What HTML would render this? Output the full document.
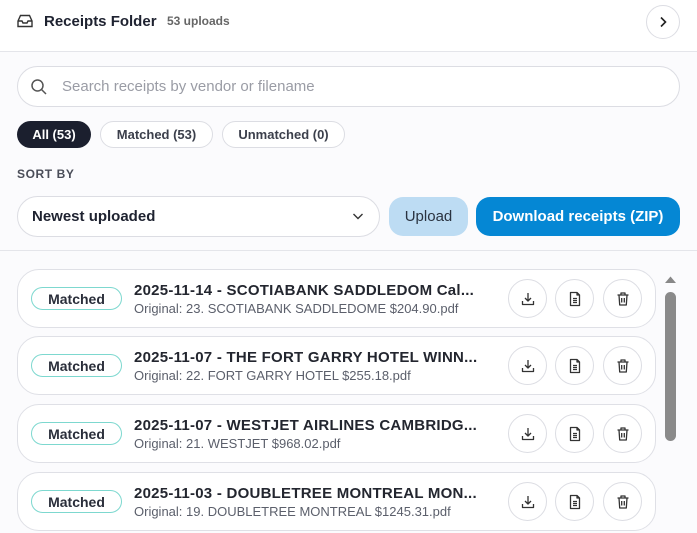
<!DOCTYPE html>
<html><head><meta charset="utf-8"><style>
*{box-sizing:border-box;margin:0;padding:0}
body{width:697px;height:533px;overflow:hidden;background:#fbfbfd;font-family:"Liberation Sans",sans-serif;color:#1e2230;position:relative}
.abs{position:absolute}
.hdr{left:0;top:0;width:697px;height:52px;border-bottom:1px solid #e4e5ea;background:#fff}
.pill{border:1px solid #dcdde3;border-radius:999px;background:#fff}
.chip{top:121px;height:27px;font-size:13px;font-weight:bold;display:flex;align-items:center;justify-content:center;color:#3b3f4b}
.card{left:17px;width:639px;height:59px;border:1px solid #dfe0e6;border-radius:22px;background:#fff}
.badge{left:13px;top:17px;width:91px;height:23px;border:1.5px solid #7dd8cf;border-radius:12px;font-size:14px;font-weight:bold;display:flex;align-items:center;justify-content:center;color:#2a2e3a}
.t{left:116px;top:12px;font-size:15px;font-weight:bold;color:#23262f;letter-spacing:.25px}
.s{left:116px;top:31px;font-size:13px;color:#5b5f6b}
.ib{top:9px;width:39px;height:39px;border:1px solid #dcdde3;border-radius:50%;display:flex;align-items:center;justify-content:center}
</style></head><body>
<div class="abs hdr">
 <svg class="abs" style="left:17px;top:14px" width="16" height="14" viewBox="0 0 16 14" fill="none" stroke="#333" stroke-width="1.4"><path d="M1 7 L3.5 1.5 H12.5 L15 7 V12.5 H1 Z M1 7 H5 L6 9 H10 L11 7 H15"/></svg>
 <div class="abs" style="left:44px;top:13px;font-size:15px;font-weight:bold">Receipts Folder</div>
 <div class="abs" style="left:167px;top:14px;font-size:12px;font-weight:bold;color:#666">53 uploads</div>
 <div class="abs pill" style="left:646px;top:5px;width:34px;height:34px;display:flex;align-items:center;justify-content:center"><svg width="10" height="12" viewBox="0 0 10 12" fill="none" stroke="#222" stroke-width="1.6"><path d="M3 1.5 L7.5 6 L3 10.5"/></svg></div>
</div>
<div class="abs pill" style="left:17px;top:66px;width:663px;height:41px"></div>
<svg class="abs" style="left:30px;top:78px" width="18" height="18" viewBox="0 0 18 18" fill="none" stroke="#555" stroke-width="1.5"><circle cx="7.5" cy="7.5" r="5.5"/><path d="M11.5 11.5 L16 16"/></svg>
<div class="abs" style="left:62px;top:78px;font-size:15px;color:#9a9ca5">Search receipts by vendor or filename</div>
<div class="abs chip" style="left:17px;width:74px;background:#1b1f2e;color:#fff;border-radius:14px">All (53)</div>
<div class="abs chip pill" style="left:100px;width:113px">Matched (53)</div>
<div class="abs chip pill" style="left:222px;width:123px">Unmatched (0)</div>
<div class="abs" style="left:17px;top:167px;font-size:12px;font-weight:bold;color:#4a4d58;letter-spacing:.6px">SORT BY</div>
<div class="abs pill" style="left:17px;top:196px;width:363px;height:41px"></div>
<div class="abs" style="left:32px;top:208px;font-size:15px;font-weight:bold">Newest uploaded</div>
<svg class="abs" style="left:352px;top:211px" width="12" height="10" viewBox="0 0 12 10" fill="none" stroke="#333" stroke-width="1.4"><path d="M1.5 3 L6 7.5 L10.5 3"/></svg>
<div class="abs" style="left:389px;top:197px;width:79px;height:39px;background:#bddcf3;border-radius:14px;font-size:15px;display:flex;align-items:center;justify-content:center;color:#2a3340">Upload</div>
<div class="abs" style="left:476px;top:197px;width:204px;height:39px;background:#0587d4;border-radius:14px;font-size:15px;font-weight:bold;display:flex;align-items:center;justify-content:center;color:#fff">Download receipts (ZIP)</div>
<div class="abs" style="left:0;top:250px;width:697px;height:1px;background:#e4e5ea"></div>
<svg class="abs" style="left:664px;top:275px" width="13" height="9"><path d="M1 8 L6.5 1.5 L12 8Z" fill="#888"/></svg>
<div class="abs" style="left:665px;top:292px;width:11px;height:149px;background:#8a8a8a;border-radius:6px"></div>

<div class="abs card" style="top:269px"><div class="abs badge">Matched</div><div class="abs t">2025-11-14 - SCOTIABANK SADDLEDOM Cal...</div><div class="abs s">Original: 23. SCOTIABANK SADDLEDOME $204.90.pdf</div>
<div class="abs ib" style="left:490px">D</div><div class="abs ib" style="left:537px">F</div><div class="abs ib" style="left:585px">T</div></div>
<div class="abs card" style="top:336px"><div class="abs badge">Matched</div><div class="abs t">2025-11-07 - THE FORT GARRY HOTEL WINN...</div><div class="abs s">Original: 22. FORT GARRY HOTEL $255.18.pdf</div>
<div class="abs ib" style="left:490px">D</div><div class="abs ib" style="left:537px">F</div><div class="abs ib" style="left:585px">T</div></div>
<div class="abs card" style="top:404px"><div class="abs badge">Matched</div><div class="abs t">2025-11-07 - WESTJET AIRLINES CAMBRIDG...</div><div class="abs s">Original: 21. WESTJET $968.02.pdf</div>
<div class="abs ib" style="left:490px">D</div><div class="abs ib" style="left:537px">F</div><div class="abs ib" style="left:585px">T</div></div>
<div class="abs card" style="top:472px"><div class="abs badge">Matched</div><div class="abs t">2025-11-03 - DOUBLETREE MONTREAL MON...</div><div class="abs s">Original: 19. DOUBLETREE MONTREAL $1245.31.pdf</div>
<div class="abs ib" style="left:490px">D</div><div class="abs ib" style="left:537px">F</div><div class="abs ib" style="left:585px">T</div></div>

<script>
const icons={D:'<path d="M8 2V10M5 7L8 10L11 7M2.5 10V13.5H13.5V10"/>',F:'<path d="M3.5 1.5H10L12.5 4V14.5H3.5Z M10 1.5V4H12.5 M6 7.5H10 M6 9.5H10 M6 11.5H10"/>',T:'<path d="M2.5 4H13.5 M6 4V2H10V4 M4 4L4.7 14H11.3L12 4 M6.7 7V11.5 M9.3 7V11.5"/>'};
document.querySelectorAll('.ib').forEach(e=>{const k=e.textContent;e.innerHTML='<svg width="16" height="16" viewBox="0 0 16 16" fill="none" stroke="#333" stroke-width="1.3" stroke-linejoin="round">'+icons[k]+'</svg>';});
</script>
</body></html>
